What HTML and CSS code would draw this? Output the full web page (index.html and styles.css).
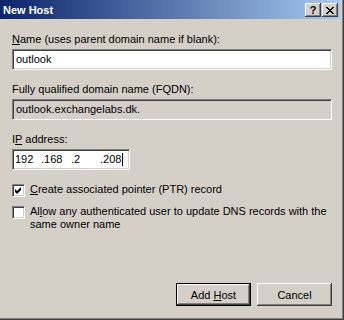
FILE: index.html
```html
<!DOCTYPE html>
<html lang="en">
<head>
    <meta charset="UTF-8">
    <meta name="viewport" content="width=device-width, initial-scale=1.0">
    <title>New Host</title>
    <link rel="stylesheet" href="styles.css">
</head>
<body>
    <div class="window">
        <div class="title-bar">
            <span class="title-text">New Host</span>
            <div class="title-buttons">
                <span class="title-btn help">?</span>
                <span class="title-btn close">
                    <svg width="8" height="7" viewBox="0 0 8 7">
                        <path d="M0 0h2v1h1v1h2v-1h1v-1h2v1h-1v1h-1v1h-1v1h1v1h1v1h1v1h-2v-1h-1v-1h-2v1h-1v1h-2v-1h1v-1h1v-1h1v-1h-1v-1h-1v-1h-1z" fill="#000"/>
                    </svg>
                </span>
            </div>
        </div>

        <div class="content">
            <label class="field-label"><u>N</u>ame (uses parent domain name if blank):</label>
            <div class="edit">outlook</div>

            <label class="field-label">Fully qualified domain name (FQDN):</label>
            <div class="edit disabled">outlook.exchangelabs.dk.</div>

            <label class="field-label">I<u>P</u> address:</label>
            <div class="edit ip-box">
                <span class="octet o1">192</span><span class="octet o2">.168</span><span class="octet o3">.2</span><span class="octet">.208</span><span class="caret"></span>
            </div>

            <div class="check-row first">
                <span class="check-box">
                    <svg width="7" height="7" viewBox="0 0 7 7">
                        <path d="M6 0v3l-4 4-2-2v-3l2 2z" fill="#000"/>
                    </svg>
                </span>
                <span class="check-label"><u>C</u>reate associated pointer (PTR) record</span>
            </div>

            <div class="check-row">
                <span class="check-box"></span>
                <span class="check-label">Al<u>l</u>ow any authenticated user to update DNS records with the same owner name</span>
            </div>

            <div class="button-row">
                <button class="push-btn default">Add <u>H</u>ost</button>
                <button class="push-btn">Cancel</button>
            </div>
        </div>
    </div>
</body>
</html>
```

FILE: styles.css
```css
body {
    margin: 0;
    padding: 0;
    background-color: #d4d0c8;
    font-family: "Liberation Sans", Arial, sans-serif;
    font-size: 11px;
    color: #000;
}

.window {
    width: 344px;
    height: 320px;
    box-sizing: border-box;
    padding: 0 3px 3px 0;
    background: #d4d0c8;
    box-shadow: inset -1px -1px #404040, inset -2px -2px #808080;
    display: flex;
    flex-direction: column;
}

.title-bar {
    height: 19px;
    margin-right: 1px;
    display: flex;
    align-items: center;
    justify-content: space-between;
    padding: 0 2px 0 3px;
    background: linear-gradient(to right, #0a246a, #a6caf0);
}

.title-text {
    color: #fff;
    font-weight: bold;
    font-size: 11px;
}

.title-buttons {
    display: flex;
    margin-top: 1px;
}

.title-btn {
    width: 16px;
    height: 14px;
    box-sizing: border-box;
    display: flex;
    align-items: center;
    justify-content: center;
    background: #d4d0c8;
    box-shadow: inset -1px -1px #404040, inset 1px 1px #fff, inset -2px -2px #808080;
    font-weight: bold;
    font-size: 11px;
    line-height: 1;
}

.close {
    margin-left: 1px;
}

.content {
    flex: 1;
    display: flex;
    flex-direction: column;
    padding: 14px 9px 11px 12px;
}

.field-label {
    display: block;
    line-height: 13px;
    height: 13px;
}

.edit {
    height: 21px;
    box-sizing: border-box;
    margin: 3px 0 13px;
    padding: 0 3px;
    background: #fff;
    border: 1px solid;
    border-color: #808080 #fff #fff #808080;
    box-shadow: inset 1px 1px #404040, inset -1px -1px #d4d0c8;
    line-height: 19px;
    white-space: nowrap;
}

.edit.disabled {
    background: #d4d0c8;
}

.ip-box {
    width: 118px;
    padding-left: 2px;
    display: flex;
    align-items: center;
}

.octet {
    display: inline-block;
}

.o1 {
    width: 26px;
}

.o2 {
    width: 30px;
}

.o3 {
    width: 29px;
}

.caret {
    display: inline-block;
    width: 1px;
    height: 13px;
    background: #000;
    margin-left: 1px;
}

.check-row {
    display: flex;
    align-items: flex-start;
    margin-top: 8px;
    line-height: 13px;
}

.check-row.first {
    margin-top: 0;
}

.check-box {
    flex: none;
    width: 13px;
    height: 13px;
    box-sizing: border-box;
    margin-top: 1px;
    margin-right: 5px;
    display: flex;
    align-items: center;
    justify-content: center;
    background: #fff;
    border: 1px solid;
    border-color: #808080 #fff #fff #808080;
    box-shadow: inset 1px 1px #404040, inset -1px -1px #d4d0c8;
}

.check-label {
    flex: 1;
}

.button-row {
    margin-top: auto;
    display: flex;
    justify-content: flex-end;
    gap: 6px;
}

.push-btn {
    width: 75px;
    height: 23px;
    box-sizing: border-box;
    padding: 0;
    font-family: "Liberation Sans", Arial, sans-serif;
    font-size: 11px;
    color: #000;
    background: #d4d0c8;
    border: none;
    box-shadow: inset -1px -1px #404040, inset 1px 1px #fff, inset -2px -2px #808080, inset 2px 2px #d4d0c8;
}

.push-btn.default {
    border: 1px solid #000;
}
```
